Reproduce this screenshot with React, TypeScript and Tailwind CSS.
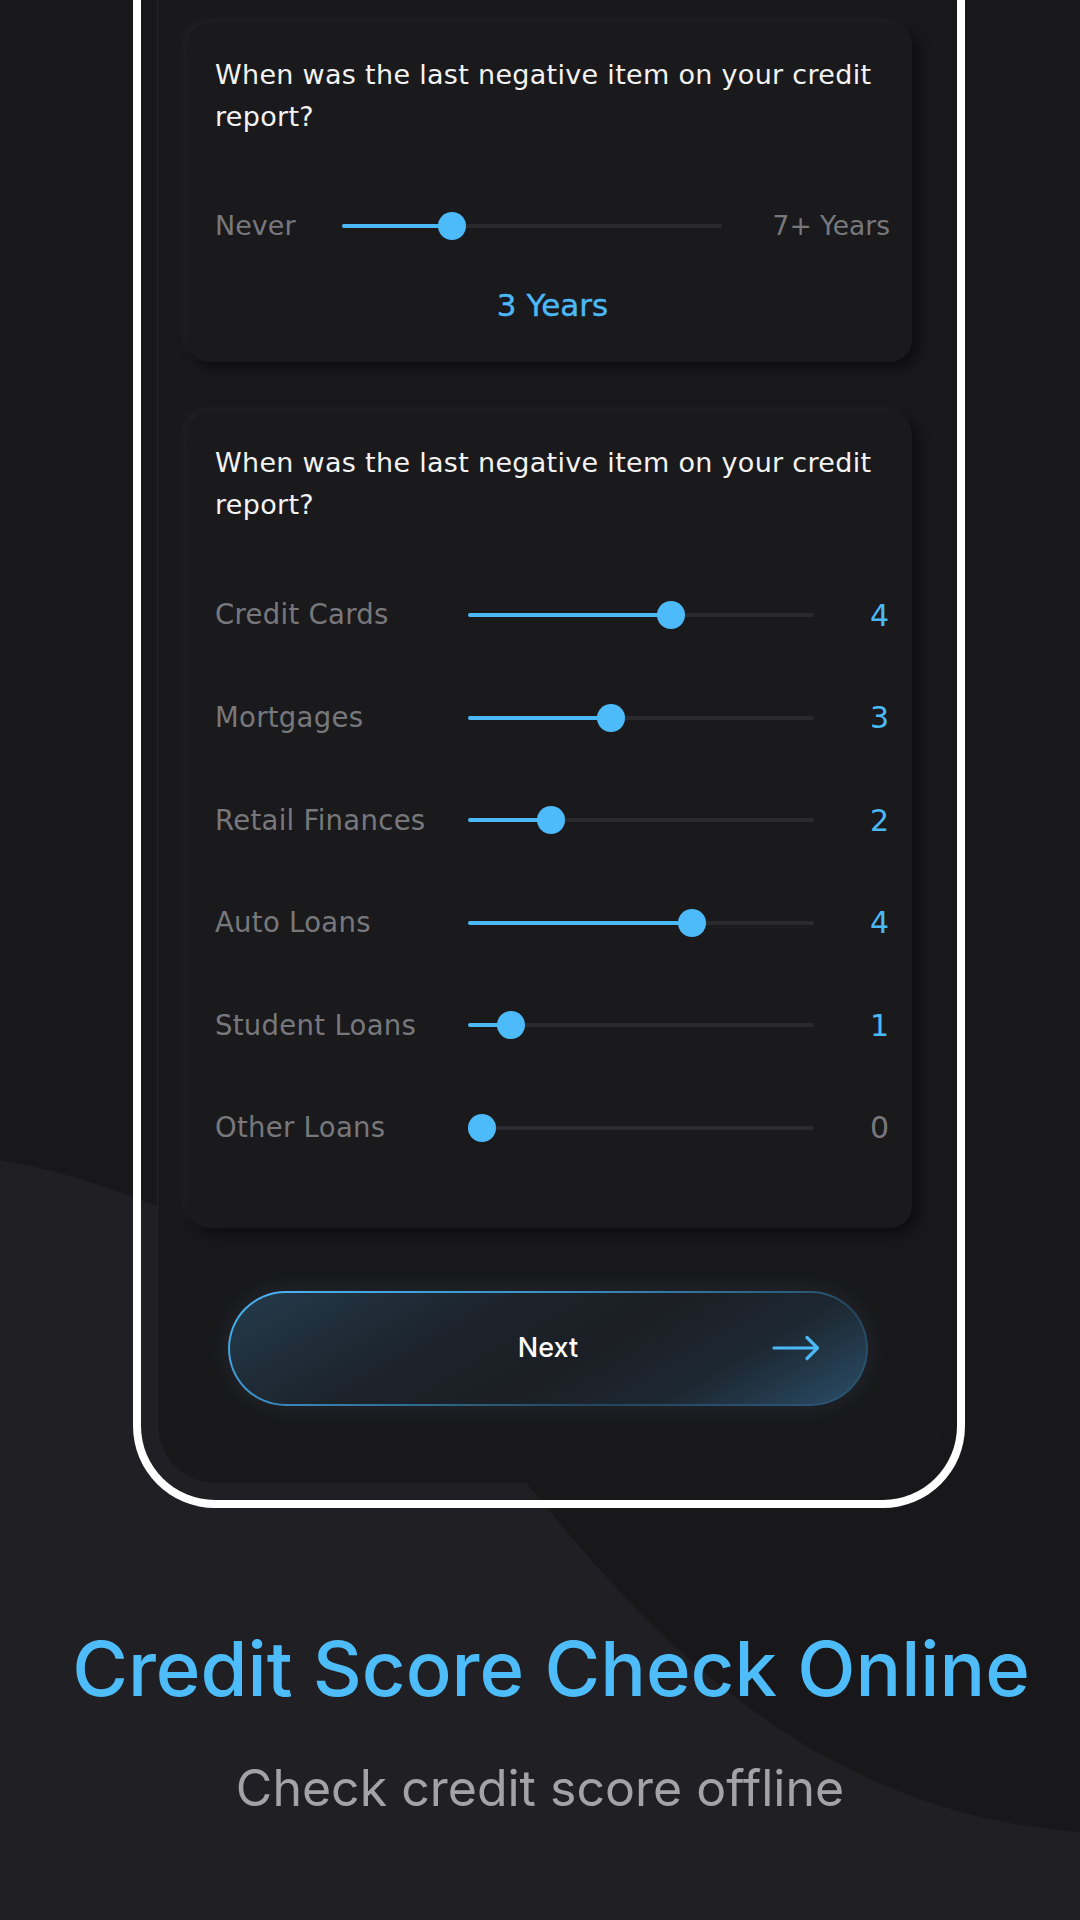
import React from "react";

const BLUE = "#4cb9f7";

function Track({ width, pos }: { width: number; pos: number }) {
  return (
    <div className="relative h-[4px] rounded-full bg-[#2a2a2e]" style={{ width }}>
      <div className="absolute left-0 top-0 h-[4px] rounded-full bg-[#4cb9f7]" style={{ width: pos }} />
      <div
        className="absolute top-1/2 h-[28px] w-[28px] -translate-y-1/2 rounded-full bg-[#4dbbfa]"
        style={{ left: pos - 14 }}
      />
    </div>
  );
}

const rows = [
  { label: "Credit Cards", value: "4", pos: 203, active: true },
  { label: "Mortgages", value: "3", pos: 143, active: true },
  { label: "Retail Finances", value: "2", pos: 83, active: true },
  { label: "Auto Loans", value: "4", pos: 224, active: true },
  { label: "Student Loans", value: "1", pos: 43, active: true },
  { label: "Other Loans", value: "0", pos: 14, active: false },
];

const pop = "font-['DejaVu_Sans',sans-serif]";

export default function App() {
  return (
    <div className="relative h-[1920px] w-[1080px] overflow-hidden bg-[#18181b] font-['Inter',sans-serif]">
      <svg className="absolute inset-0" width="1080" height="1920" viewBox="0 0 1080 1920">
        <path
          d="M0 1160 C200 1195 390 1320 545 1505 C690 1685 850 1815 1080 1832 L1080 1920 L0 1920 Z"
          fill="#202024"
        />
      </svg>

      <div className="relative flex flex-col">
        {/* phone */}
        <div className="ml-[133px] flex h-[1508px] w-[832px] flex-col rounded-b-[82px] border-x-8 border-b-8 border-white px-[16px] pb-[17px]">
          <div className="flex h-full flex-col rounded-b-[58px] border-l border-[#252528] bg-[#19191c] px-[29px] pt-[23px]">
            {/* card 1 */}
            <div className="flex flex-col rounded-[22px] bg-[#1a1a1d] pl-[28px] pr-[22px] pt-[31px] pb-[37px] shadow-[-4px_-4px_10px_rgba(255,255,255,0.04),6px_6px_14px_rgba(0,0,0,0.5)]">
              <p className={`${pop} text-[27px] leading-[42px] tracking-[0.3px] text-[#f3f3f3]`}>
                When was the last negative item on your credit report?
              </p>
              <div className="mt-[68px] flex h-[40px] items-center">
                <span className={`${pop} w-[127px] text-[27px] text-[#78787c]`}>Never</span>
                <Track width={380} pos={110} />
                <span className={`${pop} flex-1 text-right text-[26.5px] text-[#78787c]`}>7+ Years</span>
              </div>
              <div className={`${pop} mt-[39px] h-[40px] text-center text-[31px] leading-[40px] text-[#4cb9f7] [-webkit-text-stroke:0.4px_#4cb9f7]`}>
                3 Years
              </div>
            </div>

            {/* card 2 */}
            <div className="mt-[50px] flex flex-col rounded-[22px] bg-[#1a1a1d] pl-[28px] pr-[23px] pt-[30px] pb-[80px] shadow-[-4px_-4px_10px_rgba(255,255,255,0.04),6px_6px_14px_rgba(0,0,0,0.5)]">
              <p className={`${pop} text-[27px] leading-[42px] tracking-[0.3px] text-[#f3f3f3]`}>
                When was the last negative item on your credit report?
              </p>
              <div className="mt-[69px] flex flex-col gap-[62.6px]">
                {rows.map((r) => (
                  <div key={r.label} className="flex h-[40px] items-center">
                    <span className={`${pop} w-[253px] text-[27.5px] tracking-[0.3px] text-[#78787c]`}>{r.label}</span>
                    <Track width={346} pos={r.pos} />
                    <span
                      className={`${pop} flex-1 text-right text-[30px] ${
                        r.active ? "text-[#4cb9f7]" : "text-[#78787c]"
                      }`}
                    >
                      {r.value}
                    </span>
                  </div>
                ))}
              </div>
            </div>

            {/* next button */}
            <div className="ml-[41px] mt-[63px] w-[640px] rounded-full bg-[linear-gradient(160deg,#4ab8f8_0%,#3a8fc4_35%,#24465c_70%,#2b5877_100%)] p-[2px] shadow-[0_0_22px_rgba(120,160,190,0.12)]">
              <div className="relative flex h-[111px] items-center justify-center rounded-full bg-[linear-gradient(150deg,#243a4b_0%,#1c232b_35%,#1b1f25_55%,#1d2731_75%,#2a4d68_100%)]">
                <span className="text-[27px] font-medium text-white">Next</span>
                <svg
                  className="absolute right-[46px] top-1/2 -translate-y-1/2"
                  width="48"
                  height="26"
                  viewBox="0 0 48 26"
                  fill="none"
                  stroke={BLUE}
                  strokeWidth="3.2"
                  strokeLinecap="round"
                  strokeLinejoin="round"
                >
                  <path d="M2 13 H45 M35 2.5 L45.5 13 L35 23.5" />
                </svg>
              </div>
            </div>
          </div>
        </div>

        {/* titles */}
        <h1 className="mt-[116px] pl-[22px] text-center text-[76px] font-medium leading-[88px] text-[#4ebcf8]">
          Credit Score Check Online
        </h1>
        <p className="mt-[46px] text-center text-[50px] leading-[60px] text-[#a3a3a6]">
          Check credit score offline
        </p>
      </div>
    </div>
  );
}
